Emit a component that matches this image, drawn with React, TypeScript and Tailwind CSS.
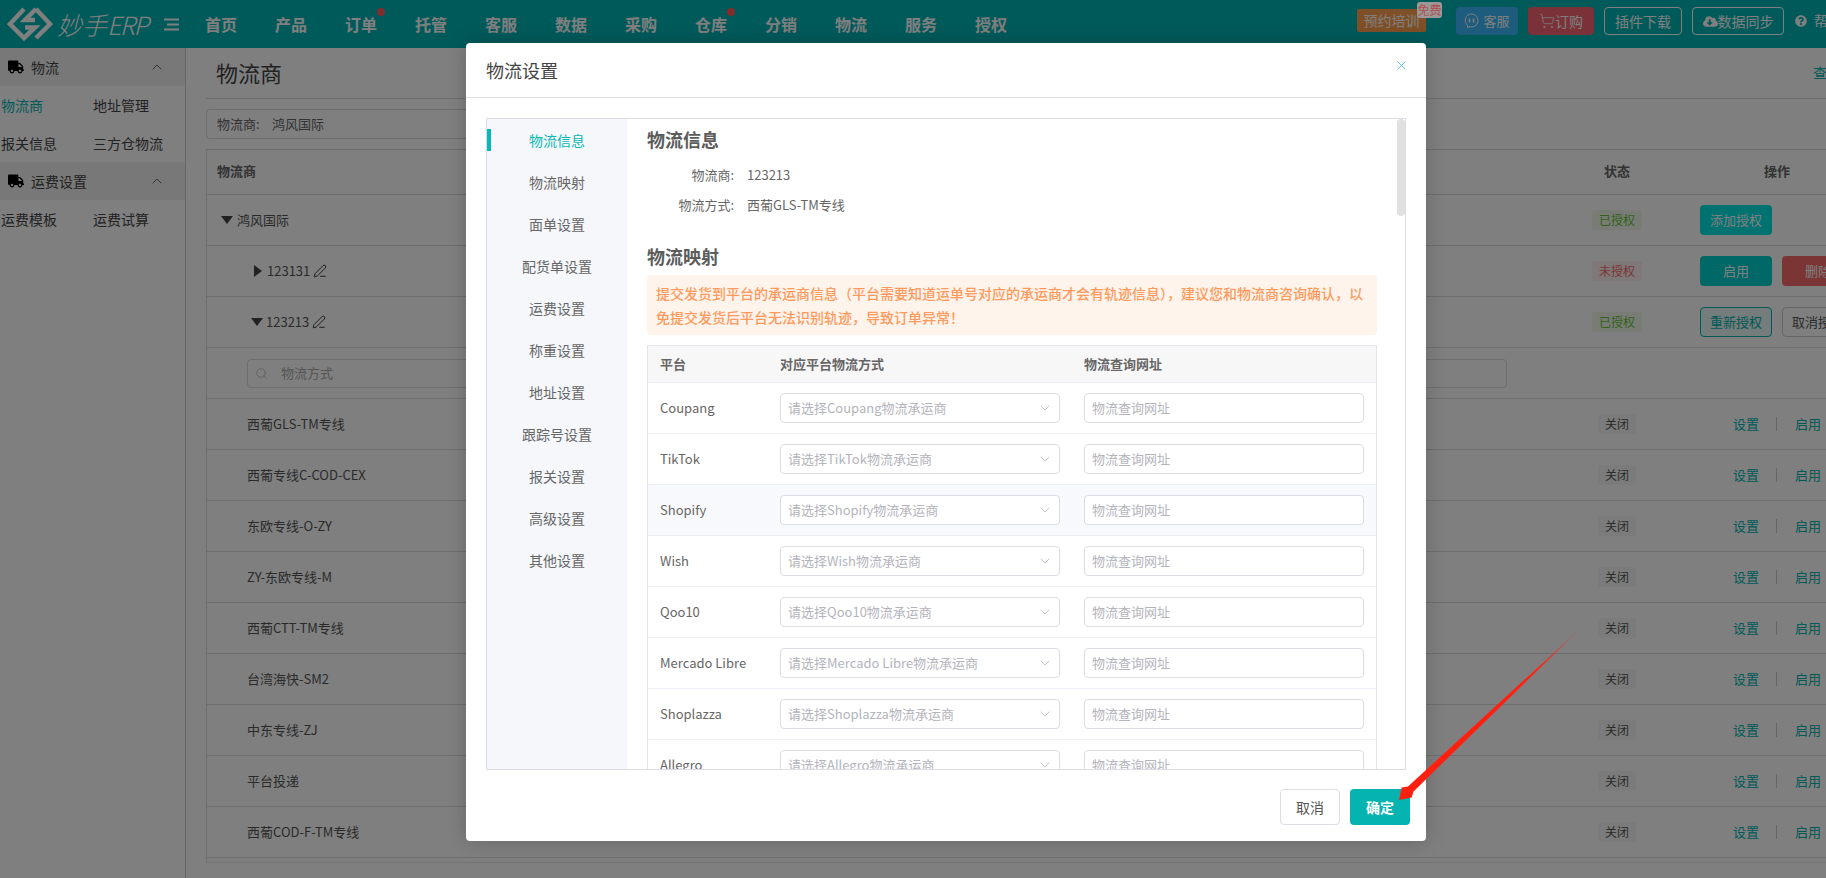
import React from "react";
import { ChevronUp, ChevronDown, X, Search, PenLine, ShoppingCart } from "lucide-react";
import { FaTruck, FaQuestionCircle, FaCloudDownloadAlt } from "react-icons/fa";

const navItems = ["首页", "产品", "订单", "托管", "客服", "数据", "采购", "仓库", "分销", "物流", "服务", "授权"];
const carriers = ["西葡GLS-TM专线", "西葡专线C-COD-CEX", "东欧专线-O-ZY", "ZY-东欧专线-M", "西葡CTT-TM专线", "台湾海快-SM2", "中东专线-ZJ", "平台投递", "西葡COD-F-TM专线"];
const settings = ["物流信息", "物流映射", "面单设置", "配货单设置", "运费设置", "称重设置", "地址设置", "跟踪号设置", "报关设置", "高级设置", "其他设置"];
const platforms = ["Coupang", "TikTok", "Shopify", "Wish", "Qoo10", "Mercado Libre", "Shoplazza", "Allegro"];
const alertOne = "提交发货到平台的承运商信息\uFF08平台需要知道运单号对应的承运商才会有轨迹信息\uFF09\uFF0C建议您和物流商咨询确认\uFF0C以";
const alertTwo = "免提交发货后平台无法识别轨迹\uFF0C导致订单异常\uFF01";

function Tag({ text, kind }: { text: string; kind: "ok" | "no" | "off" }) {
  const cls =
    kind === "ok"
      ? "w-[50px] bg-[#f0f9eb] text-[#67c23a]"
      : kind === "no"
        ? "w-[50px] bg-[#fef0f0] text-[#f56c6c]"
        : "w-[38px] bg-[#f6f6f7] text-[#555555]";
  return <span className={`flex h-5 items-center justify-center rounded-[3px] text-[12px] ${cls}`}>{text}</span>;
}

function Btn({ text, cls }: { text: string; cls: string }) {
  return <span className={`flex h-[30px] w-[72px] shrink-0 items-center justify-center rounded-[4px] text-[13px] ${cls}`}>{text}</span>;
}

function Row({ left, tag, actions }: { left: React.ReactNode; tag?: React.ReactNode; actions?: React.ReactNode }) {
  return (
    <div className="flex h-[51px] items-center border-b border-[#dcdcdc] text-[13px] text-[#555555]">
      <div className="flex min-w-0 flex-1 items-center">{left}</div>
      <div className="flex w-[100px] justify-center">{tag}</div>
      <div className="flex w-[220px] items-center">{actions}</div>
    </div>
  );
}

function SideHead({ label }: { label: string }) {
  return (
    <div className="flex h-[38px] items-center bg-[#f0f0f0] pl-2 text-[14px] text-[#444444]">
      <FaTruck size={16} className="text-black" />
      <span className="ml-[7px] flex-1">{label}</span>
      <ChevronUp size={16} strokeWidth={1.2} className="mr-[20px]" />
    </div>
  );
}

function SideRow({ a, b, active }: { a: string; b: string; active?: boolean }) {
  return (
    <div className="flex h-[38px] items-center pl-px text-[14px] text-[#444444]">
      <span className={`w-[92px] ${active ? "text-[#00b4b0]" : ""}`}>{a}</span>
      <span>{b}</span>
    </div>
  );
}

function TopBar() {
  return (
    <header className="flex h-12 shrink-0 items-center bg-[#00b4b4] text-white">
      <svg width="46" height="34" viewBox="0 0 46 34" className="ml-[7px] shrink-0" fill="none" stroke="white" strokeWidth="4.5">
        <path d="M17 2 L3 17 L17 31 L28 20.5 H18" />
        <path d="M29 2 L43 17 L29 31 M29 2 L18 13 H28" />
      </svg>
      <span className="ml-[4px] w-[92px] shrink-0 whitespace-nowrap text-[25px] font-light italic leading-none">
        妙手<span className="tracking-[-1.5px]">ERP</span>
      </span>
      <svg width="17" height="13" viewBox="0 0 17 13" className="ml-[14px] shrink-0" fill="none" stroke="white" strokeWidth="2">
        <path d="M1 1.5 H16 M4 6.5 H16 M1 11.5 H16" />
      </svg>
      <nav className="ml-[25px] flex shrink-0 gap-[38px] text-[16px] font-bold">
        {navItems.map((n) => (
          <span key={n} className="relative w-8 whitespace-nowrap">
            {n}
            {(n === "订单" || n === "仓库") && <span className="absolute -right-[8px] -top-[4px] h-2 w-2 rounded-full bg-[#ff5a5a]" />}
          </span>
        ))}
      </nav>
      <div className="ml-[350px] flex shrink-0 items-start self-start pt-[7px] text-[14px]">
        <span className="mt-[2px] flex h-[23px] w-[69px] items-center justify-center rounded-[2px] bg-[#ff9f4f]">预约培训</span>
        <span className="ml-[30px] flex h-7 w-[62px] items-center justify-center gap-[4px] rounded-[4px] bg-[#3bb8f8] text-[13px]">
          <svg width="15" height="16" viewBox="0 0 15 16" fill="none" stroke="white" strokeWidth="1">
            <path d="M7.5 1 A6.5 6.5 0 1 1 5 13.5 L3.5 15 V12.5 A6.5 6.5 0 0 1 7.5 1 Z" />
            <path d="M5.5 5.5 V9.5 M9.5 5.5 V9.5" strokeWidth="1.6" />
          </svg>
          客服
        </span>
        <span className="ml-[10px] flex h-7 w-[66px] items-center justify-center rounded-[4px] bg-[#f46470]">
          <ShoppingCart size={16} strokeWidth={1.2} />
          订购
        </span>
        <span className="ml-[10px] flex h-7 w-[78px] items-center justify-center rounded-[4px] border border-white">插件下载</span>
        <span className="ml-[10px] flex h-7 w-[92px] items-center justify-center rounded-[4px] border border-white">
          <FaCloudDownloadAlt size={15} />
          数据同步
        </span>
        <FaQuestionCircle size={12} className="ml-[11px] mt-[8px] shrink-0" />
        <span className="ml-[7px] mt-[3px] whitespace-nowrap">帮助</span>
      </div>
    </header>
  );
}

function Background() {
  return (
    <div className="flex min-h-0 flex-1">
      <aside className="w-[186px] shrink-0 border-r border-[#cccccc] bg-white">
        <SideHead label="物流" />
        <SideRow a="物流商" b="地址管理" active />
        <SideRow a="报关信息" b="三方仓物流" />
        <SideHead label="运费设置" />
        <SideRow a="运费模板" b="运费试算" />
      </aside>
      <main className="min-w-0 flex-1 overflow-hidden bg-white pl-5">
        <div className="flex h-[51px] w-[1620px] items-center justify-between border-b border-[#dcdcdc] pb-[1px]">
          <span className="ml-[10px] text-[22px] text-[#444444]">物流商</span>
          <span className="w-[13px] overflow-hidden whitespace-nowrap text-[14px] text-[#00b4b0]">查</span>
        </div>
        <div className="mt-[10px] flex h-[30px] w-[1000px] items-center rounded-[4px] border border-[#dcdcdc] pl-[10px] text-[13px] text-[#666666]">
          <span className="w-[55px]">物流商:</span>
          <span>鸿风国际</span>
        </div>
        <div className="mt-[10px] w-[1681px] border-l border-t border-[#dcdcdc]">
          <div className="flex h-[45px] items-center border-b border-[#dcdcdc] pb-[3px] text-[13px] font-bold text-[#666666]">
            <span className="flex-1 pl-[10px]">物流商</span>
            <span className="w-[100px] text-center">状态</span>
            <span className="w-[220px] text-center">操作</span>
          </div>
          <Row
            left={<span className="ml-[14px] flex items-center gap-[4px]"><span className="h-0 w-0 border-x-[6px] border-t-[8px] border-x-transparent border-t-[#444444]" />鸿风国际</span>}
            tag={<Tag text="已授权" kind="ok" />}
            actions={<div className="pl-[33px]"><Btn text="添加授权" cls="bg-[#00e4e0] text-white" /></div>}
          />
          <Row
            left={<span className="ml-[47px] flex items-center gap-[5px]"><span className="h-0 w-0 border-y-[6px] border-l-[8px] border-y-transparent border-l-[#444444]" />123131<PenLine size={14} strokeWidth={1.5} className="-ml-[2px] text-[#222222]" /></span>}
            tag={<Tag text="未授权" kind="no" />}
            actions={<div className="flex gap-[10px] pl-[33px]"><Btn text="启用" cls="bg-[#00d0cc] text-white" /><Btn text="删除" cls="bg-[#f86a6a] text-white" /></div>}
          />
          <Row
            left={<span className="ml-[44px] flex items-center gap-[3px]"><span className="h-0 w-0 border-x-[6px] border-t-[8px] border-x-transparent border-t-[#444444]" />123213<PenLine size={14} strokeWidth={1.5} className="text-[#222222]" /></span>}
            tag={<Tag text="已授权" kind="ok" />}
            actions={<div className="flex gap-[10px] pl-[33px]"><Btn text="重新授权" cls="border border-[#00b4b0] bg-[#e8f8f8] text-[#00b4b0]" /><Btn text="取消授权" cls="border border-[#cccccc] bg-white text-[#555555]" /></div>}
          />
          <div className="flex h-[51px] items-center border-b border-[#dcdcdc] pl-[40px]">
            <div className="flex h-[29px] w-[1260px] items-center rounded-[4px] border border-[#dcdcdc] pl-[7px] text-[13px] text-[#aaaaaa]">
              <Search size={13} strokeWidth={1.2} />
              <span className="ml-[13px]">物流方式</span>
            </div>
          </div>
          {carriers.map((c) => (
            <Row
              key={c}
              left={<span className="ml-[40px]">{c}</span>}
              tag={<Tag text="关闭" kind="off" />}
              actions={
                <div className="flex items-center pl-[66px] text-[13px] text-[#00b4b0]">
                  <span>设置</span>
                  <span className="ml-[17px] h-[14px] w-px bg-[#cccccc]" />
                  <span className="ml-[18px]">启用</span>
                </div>
              }
            />
          ))}
          <div className="mt-[4px] border-t border-[#e4e4e4]" />
        </div>
      </main>
    </div>
  );
}

function Modal() {
  return (
    <div className="absolute left-[466px] top-[43px] flex h-[798px] w-[960px] flex-col rounded-[4px] bg-white shadow-[0_0_20px_rgba(0,0,0,0.2)]">
      <div className="flex h-[55px] shrink-0 items-center justify-between border-b border-[#dfdfe6] pl-5 pr-[17px]">
        <span className="text-[18px] text-[#444444]">物流设置</span>
        <X size={15} strokeWidth={1.3} className="mb-[10px] text-[#3fbfee]" />
      </div>
      <div className="relative mx-5 mt-5 flex h-[652px] shrink-0 overflow-hidden border border-[#dcdce6]">
        <div className="w-[140px] shrink-0 bg-[#f5f7fb]">
          {settings.map((s, i) => (
            <div key={s} className={`relative flex h-[42px] items-center justify-center text-[14px] ${i === 0 ? "text-[#08b8b4]" : "text-[#666666]"}`}>
              {i === 0 && <span className="absolute left-0 top-[10px] h-[22px] w-1 bg-[#08b8b4]" />}
              {s}
            </div>
          ))}
        </div>
        <div className="flex-1 overflow-hidden pl-5">
          <div className="flex h-[41px] items-center text-[18px] font-bold text-[#5c5c5c]">物流信息</div>
          <div className="flex h-[30px] items-center text-[13px] text-[#666666]">
            <span className="w-[87px] text-right">物流商:</span>
            <span className="ml-[13px]">123213</span>
          </div>
          <div className="flex h-[30px] items-center text-[13px] text-[#666666]">
            <span className="w-[87px] text-right">物流方式:</span>
            <span className="ml-[13px]">西葡GLS-TM专线</span>
          </div>
          <div className="mt-[18px] flex h-[37px] items-center text-[18px] font-bold text-[#5c5c5c]">物流映射</div>
          <div className="h-[60px] w-[730px] whitespace-nowrap rounded-[4px] bg-[#fff4ec] px-[9px] py-[6px] text-[14px] font-medium leading-[24px] text-[#ff9a5c]">
            {alertOne}
            <br />
            {alertTwo}
          </div>
          <div className="mt-[10px] w-[730px] border border-[#e3e4ec]">
            <div className="flex h-[37px] items-center border-b border-[#eceef5] bg-[#f7f7f8] text-[13px] font-bold text-[#666666]">
              <span className="w-[132px] pl-3">平台</span>
              <span className="w-[304px]">对应平台物流方式</span>
              <span>物流查询网址</span>
            </div>
            {platforms.map((p, i) => (
              <div key={p} className={`flex h-[51px] items-center border-b border-[#eceef5] text-[13px] text-[#666666] ${i === 2 ? "bg-[#f8f9fc]" : ""}`}>
                <span className="w-[132px] pl-3">{p}</span>
                <div className="w-[304px]">
                  <div className="flex h-[30px] w-[280px] items-center justify-between rounded-[4px] border border-[#dcdce6] bg-white pl-[7px] pr-[6px] text-[#b4b4bc]">
                    <span>请选择{p}物流承运商</span>
                    <ChevronDown size={16} strokeWidth={1} className="text-[#aaaaaa]" />
                  </div>
                </div>
                <div className="flex h-[30px] w-[280px] items-center rounded-[4px] border border-[#dcdce6] bg-white pl-[7px] text-[#b4b4bc]">物流查询网址</div>
              </div>
            ))}
          </div>
        </div>
        <span className="absolute right-0 top-0 h-[97px] w-2 rounded-full bg-[#e0e0e0]" />
      </div>
      <div className="flex flex-1 items-start justify-end gap-[10px] pr-4 pt-[19px] text-[14px]">
        <span className="flex h-9 w-[60px] items-center justify-center rounded-[4px] border border-[#dcdce6] text-[#555555]">取消</span>
        <span className="flex h-9 w-[60px] items-center justify-center rounded-[4px] bg-[#05b4b0] font-bold text-white">确定</span>
      </div>
    </div>
  );
}

export default function App() {
  return (
    <div className="relative flex h-[878px] w-[1826px] flex-col overflow-hidden font-['Noto_Sans_CJK_SC',sans-serif]">
      <TopBar />
      <Background />
      <div className="absolute inset-0 bg-black/50" />
      <span className="absolute left-[1417px] top-[2px] flex h-4 w-[25px] items-center justify-center rounded-[3px] bg-[#9c9898] text-[12px] text-[#b05050]">免费</span>
      <Modal />
      <svg width="1826" height="878" className="pointer-events-none absolute inset-0">
        <defs>
          <linearGradient id="arrow" gradientUnits="userSpaceOnUse" x1="1582" y1="627" x2="1540" y2="667">
            <stop offset="0" stopColor="#ff2a15" stopOpacity="0.2" />
            <stop offset="1" stopColor="#ff2010" />
          </linearGradient>
        </defs>
        <polygon points="1582,627 1408,786.5 1401.7,787.5 1399,800 1411.7,797.5 1413.5,791.5" fill="url(#arrow)" />
      </svg>
    </div>
  );
}
